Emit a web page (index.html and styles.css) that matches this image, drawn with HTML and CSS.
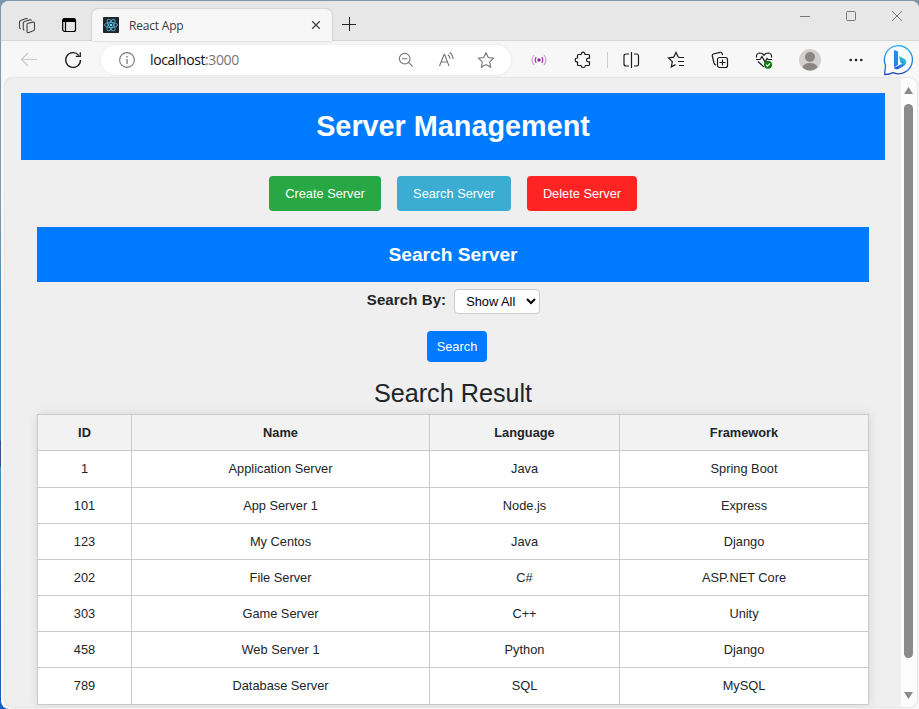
FILE: index.html
```html
<!DOCTYPE html>
<html lang="en">
<head>
<meta charset="utf-8">
<title>React App</title>
<link rel="stylesheet" href="styles.css">
</head>
<body>
<div class="window">
  <header class="titlebar">
    <div class="title-tools">
      <svg class="workspaces" width="18" height="18" viewBox="0 0 18 18"><path d="m10 6.300 5-1.200q1.500-.3 1.500 1.200v6q0 1.200-1.200 1.500l-4.500 1.700q-1.800.5-1.800-1.200V7.500q0-1 1-1.200M6.300 13.200q-1-.4-1-1.500V6q0-1.200 1.200-1.600l5-1.500q1.500-.3 2 .6M2.800 12q-1.300-.3-1.300-1.500V5q0-1.200 1.200-1.600L8 1.600q1-.3 1.700.3"/></svg>
      <svg width="16" height="16" viewBox="0 0 16 16"><rect x="1.700" y="1.700" width="12.800" height="12.800" rx="2" fill="none" stroke="#000" stroke-width="1.200"/><path d="M1.500 5V3q0-1.500 1.500-1.500h10q1.500 0 1.500 1.500v2z"/><path d="M4.500 5v9" stroke="#000"/></svg>
    </div>
    <div class="tab">
      <svg class="favicon" width="16" height="16" viewBox="0 0 16 16"><rect width="16" height="16" rx="1" fill="#20232a"/><g fill="none" stroke="#4fb4ce" stroke-width=".9"><ellipse cx="8" cy="8" rx="6.500" ry="2.500"/><ellipse cx="8" cy="8" rx="6.500" ry="2.500" transform="rotate(60 8 8)"/><ellipse cx="8" cy="8" rx="6.500" ry="2.500" transform="rotate(120 8 8)"/></g><circle cx="8" cy="8" r="1.300" fill="#61dafb"/></svg>
      <span class="tab-title">React App</span>
      <svg class="tab-close" width="10" height="10" viewBox="0 0 10 10"><path d="m1.200 1.200 7.600 7.600m0-7.600-7.600 7.600"/></svg>
    </div>
    <svg class="new-tab" width="14" height="14" viewBox="0 0 14 14"><path d="M7.500 0v14M0 7.500h14"/></svg>
    <div class="captions">
      <svg width="12" height="12" viewBox="0 0 12 12"><path d="M1 7.500h10"/></svg>
      <svg width="12" height="12" viewBox="0 0 12 12"><rect x="1.500" y="2.500" width="9" height="9" rx="1"/></svg>
      <svg width="12" height="12" viewBox="0 0 12 12"><path d="m1 2 10 10m0-10L1 12"/></svg>
    </div>
  </header>
  <div class="toolbar">
    <div class="nav">
      <svg class="back" width="18" height="16" viewBox="0 0 18 16"><path d="M17 7.500H1.500M8 1 1.500 7.500 8 14"/></svg>
      <svg class="reload" width="18" height="18" viewBox="0 0 18 18"><path d="M14.800 4.300A7.400 7.400 0 1 0 16.500 9M16.300 1.200v4.200h-4.500"/></svg>
    </div>
    <div class="address">
      <svg class="info" width="18" height="18" viewBox="0 0 18 18"><circle cx="9" cy="9" r="7.400"/><path d="M9 8v5" stroke-width="1.300"/><path d="M9 5v1.500" stroke-width="1.300"/></svg>
      <span class="url">localhost<span>:3000</span></span>
      <div class="address-tools">
        <svg width="16" height="16" viewBox="0 0 16 16"><circle cx="6.700" cy="6.700" r="5.300"/><path d="M4 6.700h5.400m1.300 4 4 4"/></svg>
        <svg width="18" height="18" viewBox="0 0 18 18"><path d="m2.500 15 4.500-11.500h.6L12 15M4 11h6.500M11 3.700q2 1.500 2 4.300M12.500 1.500q3.500 2.300 3.500 6.500"/></svg>
        <svg width="18" height="18" viewBox="0 0 18 18"><path d="m9 1.700 2.300 4.800 5.200.7-3.800 3.700.9 5.200L9 13.600l-4.600 2.500.9-5.200-3.800-3.700 5.200-.7z"/></svg>
      </div>
    </div>
    <div class="actions">
      <div class="cell"><svg class="broadcast" width="16" height="12" viewBox="0 0 16 12"><circle cx="8" cy="6" r="1.700"/><path class="near" d="M5.200 3.200q-2 2.800 0 5.600M10.800 3.200q2 2.800 0 5.600"/><path class="far" d="M3 1q-4 5 0 10M13 1q4 5 0 10"/></svg></div>
      <div class="cell"><svg width="18" height="18" viewBox="0 0 18 18"><path d="M4.500 3.500h2.700q0-2.300 1.900-2.300T11 3.500h3.500q1 0 1 1v2.700q-3-.4-3 1.800t3 1.800v2.700q0 1-1 1H11.500q-.3 2-2.300 2T7 14.500H4.500q-1 0-1-1V11Q1.200 11 1.200 9t2.300-2V4.500q0-1 1-1z"/></svg></div>
      <div class="divider"></div>
      <div class="cell"><svg width="18" height="18" viewBox="0 0 18 18"><path d="M9.500 1v16M7 3H4Q2 3 2 5v8q0 2 2 2h3M12 3h3q1.500 0 1.500 2v8q0 2-1.500 2h-3"/></svg></div>
      <div class="cell wide"><svg width="18" height="18" viewBox="0 0 18 18"><path d="m13 6.500-1.800-.4L9 1.500 6.700 6.200l-5.200.7 3.800 3.700-1 5.200L8.500 13.600M12 6.500h5M11 10.500h6M12 14.500h5"/></svg></div>
      <div class="cell"><svg width="18" height="18" viewBox="0 0 18 18"><path d="M5 13.800q-1.500 0-2-1.800L1.300 5Q1 3.500 2.300 3L9 1.300q1.500-.3 2 1l.6 1.700"/><rect x="6.500" y="6.500" width="10" height="10" rx="2"/><path d="M11.500 8.500v6m-3-3h6"/></svg></div>
      <div class="cell"><svg width="18" height="18" viewBox="0 0 18 18"><path d="M1.500 6.500Q1 2.200 4.700 2 7.500 2 9 4.200 10.500 2 13.300 2q3.700.2 3.200 4.500M3 10.500l6 5.500M1 8.500h4l2-3 3 5.500 2-3.500 1 1h4"/><circle cx="13" cy="13.700" r="4" fill="#107c10" stroke="none"/><path class="check" d="m11 13.700 1.400 1.400 2.600-2.700"/></svg></div>
      <div class="cell avatar"><svg width="22" height="22" viewBox="0 0 22 22"><circle cx="11" cy="11" r="11" fill="#d2d0ce" stroke="none"/><circle cx="11" cy="8" r="5" fill="#8a8685" stroke="none"/><path d="M3.500 18.500q1-4.500 7.500-4.500t7.500 4.500a11 11 0 0 1-15 0" fill="#8a8685" stroke="none"/></svg></div>
      <div class="cell"><svg width="14" height="4" viewBox="0 0 14 4"><g fill="#1b1b1b" stroke="none"><circle cx="1.700" cy="2" r="1.300"/><circle cx="7" cy="2" r="1.300"/><circle cx="12.300" cy="2" r="1.300"/></g></svg></div>
      <div class="cell bing"><svg width="32" height="32" viewBox="0 0 32 32"><defs><linearGradient id="ring" x2="0" y2="1"><stop stop-color="#31b5ed"/><stop offset="1" stop-color="#1b4fc4"/></linearGradient><linearGradient id="bowl" x1="0" x2="1" y1="1" y2="0"><stop stop-color="#1c46df"/><stop offset=".5" stop-color="#258bea"/><stop offset="1" stop-color="#42e3cb"/></linearGradient></defs><path d="M2.600 21.500A14 14 0 1 1 10 28.700Q6 30.700 1.700 30.500 2 25.500 2.600 21.500z" fill="#fff" stroke="url(#ring)" stroke-width="1.300"/><path d="m11 6 4 1.500v13.300L11 24z" fill="#2488ed" stroke="none"/><path d="m16 12.300 5.500 2.400q3 2 1.200 5.300-1 1.700-3 2.700l-4.500 2.300q-2.600 1-4.200-1l8.300-4.200-1.800-1z" fill="url(#bowl)" stroke="none"/></svg></div>
    </div>
  </div>
  <div class="viewport">
    <main class="page">
      <h1>Server Management</h1>
      <div class="menu">
        <button class="btn create">Create Server</button>
        <button class="btn find">Search Server</button>
        <button class="btn delete">Delete Server</button>
      </div>
      <section class="panel">
        <h2>Search Server</h2>
        <div class="filter">
          <label for="by">Search By:</label>
          <select id="by"><option>Show All</option></select>
        </div>
        <button class="btn submit">Search</button>
        <h3>Search Result</h3>
        <table>
          <colgroup><col class="c-id"><col class="c-name"><col class="c-lang"><col class="c-frame"></colgroup>
          <thead><tr><th>ID</th><th>Name</th><th>Language</th><th>Framework</th></tr></thead>
          <tbody>
            <tr class="tall"><td>1</td><td>Application Server</td><td>Java</td><td>Spring Boot</td></tr>
            <tr><td>101</td><td>App Server 1</td><td>Node.js</td><td>Express</td></tr>
            <tr><td>123</td><td>My Centos</td><td>Java</td><td>Django</td></tr>
            <tr><td>202</td><td>File Server</td><td>C#</td><td>ASP.NET Core</td></tr>
            <tr><td>303</td><td>Game Server</td><td>C++</td><td>Unity</td></tr>
            <tr><td>458</td><td>Web Server 1</td><td>Python</td><td>Django</td></tr>
            <tr class="tall"><td>789</td><td>Database Server</td><td>SQL</td><td>MySQL</td></tr>
          </tbody>
        </table>
      </section>
    </main>
    <div class="scrollbar">
      <svg width="9" height="7" viewBox="0 0 9 7"><path d="M4.500 0 9 7H0z"/></svg>
      <div class="thumb"></div>
      <svg width="9" height="7" viewBox="0 0 9 7"><path d="M4.500 7 9 0H0z"/></svg>
    </div>
  </div>
</div>
</body>
</html>
```

FILE: styles.css
```css
* { box-sizing: border-box; }

body {
  margin: 0;
  height: 709px;
  overflow: hidden;
  padding: 1px 0 0 1px;
  background: linear-gradient(#7f97ab 0, #8299ab 200px, #3f86b8 320px, #3d82b5 440px, #314f91 441px, #314f91 466px, #438fc0 468px, #3e80b7 560px, #2862bd 620px, #1b5cc4);
  font-family: "Liberation Sans", Arial, sans-serif;
  color: #212529;
}

svg { display: block; flex: none; fill: none; stroke: #1b1b1b; stroke-width: 1.2; }

.window {
  height: 708px;
  background: #f7f7f7;
  border-radius: 8px 8px 0 8px;
  overflow: hidden;
}

/* Title bar */
.titlebar { display: flex; height: 40px; background: #e7e7e7; border-bottom: 1px solid #d6d6d6; }
.title-tools { display: flex; width: 91px; padding: 16px 0 0 17px; gap: 25px; }
.title-tools svg { fill: #000; stroke: none; }
.title-tools .workspaces { fill: none; stroke: #444; stroke-width: 1.1; }
.tab {
  display: flex;
  width: 240px;
  height: 32px;
  margin-top: 8px;
  padding: 0 11px;
  align-items: center;
  background: #f7f7f7;
  border-radius: 6px 6px 0 0;
  box-shadow: 0 0 2px #aaa;
}
.favicon { stroke: none; }
.tab-title { margin-left: 10px; font: 12px "Open Sans", sans-serif; letter-spacing: -.2px; color: #3b3b3b; }
.tab-close { margin-left: auto; stroke: #444; stroke-width: 1.3; }
.new-tab { margin: 16px 0 0 10px; stroke: #222; stroke-width: 1; }
.captions { display: flex; margin: 8px 16px 0 auto; gap: 34px; }
.captions svg { stroke: #777; stroke-width: 1; overflow: visible; }

/* Toolbar */
.toolbar { display: flex; height: 37px; align-items: center; }
.nav { display: flex; width: 100px; padding-left: 19px; gap: 26px; align-items: center; }
.back { stroke: #c9c9c9; }
.reload { stroke-width: 1.3; }
.address {
  display: flex;
  width: 410px;
  height: 30px;
  padding: 0 16px 0 17px;
  align-items: center;
  border-radius: 15px;
  background: #fff;
  box-shadow: 0 0 3px #e2e2e2;
}
.address svg { stroke: #767676; stroke-width: 1.1; }
.url { margin-left: 14px; font: 14px "Open Sans", sans-serif; letter-spacing: -.4px; color: #111; }
.url span { color: #767676; }
.address-tools { display: flex; margin-left: auto; gap: 22.5px; align-items: center; }
.actions { display: flex; margin-left: 6px; height: 37px; align-items: center; }
.cell { display: flex; width: 44px; justify-content: center; }
.cell.wide { width: 45px; }
.cell.avatar { width: 48px; }
.cell.bing { width: 41px; }
.divider { width: 1px; height: 16px; margin: 0 1px 0 2px; background: #cfcfcf; }
.broadcast circle { fill: #8f249f; stroke: none; }
.broadcast .near { stroke: #a23bb1; }
.broadcast .far { stroke: #d39adb; }
.check { stroke: #fff; }

/* Page area */
.viewport {
  display: flex;
  width: 912px;
  height: 629px;
  margin: 0 0 0 4px;
  border-radius: 8px;
  overflow: hidden;
  background: #efefef;
  box-shadow: 0 0 2px #bbb;
}
.page { width: 896px; padding: 15px 16px 0; text-align: center; }
h1, h2, h3 { margin: 0; }
h1 { height: 67px; font-size: 28.8px; line-height: 66px; background: #007bff; color: #fff; }
.menu { display: flex; justify-content: center; gap: 16px; padding: 16px 0; }
.btn { display: block; border: 0; padding: 0; border-radius: 4px; color: #fff; font: 12.8px "Liberation Sans", Arial, sans-serif; }
.menu .btn { height: 35px; }
.menu .create { width: 112px; background: #28a745; }
.menu .find { width: 114px; background: #3badd3; }
.menu .delete { width: 110px; background: #ff2424; }
.panel { margin: 0 16px; }
h2 { height: 55px; font-size: 19.2px; line-height: 55px; background: #007bff; color: #fff; }
.filter { display: flex; height: 49px; padding: 7px 0 0 1px; justify-content: center; gap: 8px; }
label { font-size: 15px; font-weight: bold; line-height: 22px; letter-spacing: .1px; }
select {
  width: 86px;
  height: 25px;
  padding: 0 0 0 7px;
  border: 1px solid #ccc;
  border-radius: 4px;
  background: #fff;
  color: #000;
  font: 12.8px "Liberation Sans", Arial, sans-serif;
}
.submit { width: 60px; height: 31px; margin: 0 0 0 390px; background: #007bff; }
h3 { height: 52px; padding-top: 15px; font-size: 25.2px; font-weight: normal; line-height: 32px; }
table {
  width: 832px;
  table-layout: fixed;
  border-spacing: 0;
  border: solid #c9cacb;
  border-width: 1px 0 0 1px;
  background: #fff;
  box-shadow: 0 0 10px rgba(0, 0, 0, .1);
  font-size: 12.8px;
}
.c-id { width: 94px; }
.c-name { width: 298px; }
.c-lang { width: 190px; }
.c-frame { width: 249px; }
th, td { height: 36px; padding: 0; border: solid #c9cacb; border-width: 0 1px 1px 0; }
.tall td { height: 37px; padding-bottom: 1px; }
th { background: #f2f2f2; }

/* Scrollbar */
.scrollbar { display: flex; width: 16px; padding: 9px 1px 8px 0; flex-direction: column; align-items: center; background: #fcfcfc; }
.scrollbar svg { fill: #8b8b8b; stroke: none; }
.thumb { width: 9px; height: 554px; margin: 10px 0 auto; border-radius: 5px; background: #8b8b8b; }
```
